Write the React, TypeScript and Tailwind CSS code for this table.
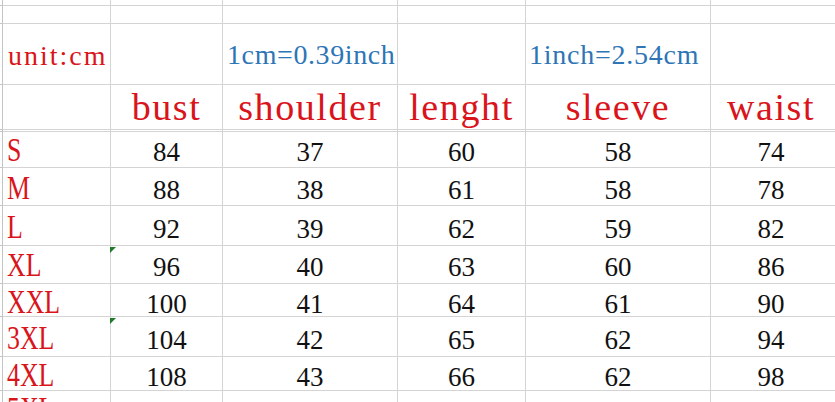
import React from "react"

type SizeRow = {
    size: string
    h: string
    off: string
    v: number[]
    mark?: boolean
}

const sizes: SizeRow[] = [
    { size: "S", h: "h-[36px]", off: "mb-[1px]", v: [84, 37, 60, 58, 74] },
    { size: "M", h: "h-[38px]", off: "mb-[1px]", v: [88, 38, 61, 58, 78] },
    { size: "L", h: "h-[40px]", off: "mb-[2px]", v: [92, 39, 62, 59, 82] },
    { size: "XL", h: "h-[38px]", off: "mb-[2px]", v: [96, 40, 63, 60, 86], mark: true },
    { size: "XXL", h: "h-[33px]", off: "-mb-[2px]", v: [100, 41, 64, 61, 90] },
    { size: "3XL", h: "h-[40px]", off: "mb-[2px]", v: [104, 42, 65, 62, 94], mark: true },
    { size: "4XL", h: "h-[32px]", off: "-mb-[1px]", v: [108, 43, 66, 62, 98] },
    { size: "5XL", h: "h-[40px]", off: "mb-[3px]", v: [] },
]

const headers = ["bust", "shoulder", "lenght", "sleeve", "waist"]

const grid = "grid grid-cols-[3px_108px_112px_175px_128px_185px_1fr]"
const cell = "border-r border-b border-[#d4d4d4]"
const edge = "border-r border-b border-[#c4c4c4]"
const red = "text-[#d9141b]"
const blue = "text-[#2e75b6]"

function Blank({ h }: { h: string }) {
    return (
        <div className={`${grid} ${h}`}>
            <div className={edge} />
            <div className={cell} />
            <div className={cell} />
            <div className={cell} />
            <div className={cell} />
            <div className={cell} />
            <div className="border-b border-[#d4d4d4]" />
        </div>
    )
}

export default function App() {
    return (
        <div className="w-[835px] h-[402px] overflow-hidden bg-white font-['Liberation_Serif',serif]">
            <Blank h="h-[6px]" />
            <Blank h="h-[18px]" />

            {/* unit row */}
            <div className={`${grid} h-[61px]`}>
                <div className={edge} />
                <div className={`${cell} flex items-end pl-[5px] pb-[14px]`}>
                    <span className={`${red} text-[28px] leading-none tracking-[2px]`}>unit:cm</span>
                </div>
                <div className={cell} />
                <div className={`${cell} flex items-end pl-[4px] pb-[15px]`}>
                    <span className={`${blue} text-[28px] leading-none tracking-[0.6px] whitespace-nowrap`}>1cm=0.39inch</span>
                </div>
                <div className={cell} />
                <div className={`${cell} flex items-end pl-[3px] pb-[15px]`}>
                    <span className={`${blue} text-[28px] leading-none tracking-[0.75px] whitespace-nowrap`}>1inch=2.54cm</span>
                </div>
                <div className="border-b border-[#d4d4d4]" />
            </div>

            {/* header row */}
            <div className={`${grid} h-[45px]`}>
                <div className={edge} />
                <div className={cell} />
                {headers.map((t, i) => (
                    <div
                        key={t}
                        className={`${i === 4 ? "border-b border-[#d4d4d4] pr-[4px]" : cell} flex items-end justify-center pb-[3px]`}
                    >
                        <span className={`${red} text-[38px] leading-none tracking-[1.6px] whitespace-nowrap`}>{t}</span>
                    </div>
                ))}
            </div>

            <Blank h="h-[2px]" />

            {sizes.map((r) => (
                <div key={r.size} className={`${grid} ${r.h}`}>
                    <div className={edge} />
                    <div className={`${cell} flex items-end pl-[4px]`}>
                        <span className={`${red} ${r.off} relative top-[1px] inline-block origin-left scale-x-[0.76] text-[34px] leading-none whitespace-nowrap`}>
                            {r.size}
                        </span>
                    </div>
                    {[0, 1, 2, 3, 4].map((i) => (
                        <div
                            key={i}
                            className={`${i === 4 ? "border-b border-[#d4d4d4] pr-[4px]" : cell} relative flex items-end justify-center`}
                        >
                            {i === 0 && r.mark && (
                                <div className="absolute -left-[1px] top-[1px] w-0 h-0 border-t-[6px] border-t-[#1f7a2a] border-r-[6px] border-r-transparent" />
                            )}
                            <span className={`${r.off} text-[27px] leading-none text-[#111]`}>{r.v[i] ?? ""}</span>
                        </div>
                    ))}
                </div>
            ))}
        </div>
    )
}
